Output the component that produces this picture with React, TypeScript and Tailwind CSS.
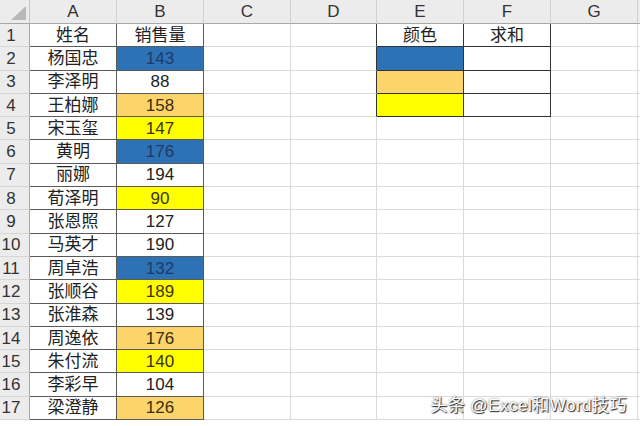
import React from 'react'

type Fill = 'blue' | 'orange' | 'yellow' | ''

const rows: [string, string, Fill][] = [
  ['姓名', '销售量', ''],
  ['杨国忠', '143', 'blue'],
  ['李泽明', '88', ''],
  ['王柏娜', '158', 'orange'],
  ['宋玉玺', '147', 'yellow'],
  ['黄明', '176', 'blue'],
  ['丽娜', '194', ''],
  ['荀泽明', '90', 'yellow'],
  ['张恩照', '127', ''],
  ['马英才', '190', ''],
  ['周卓浩', '132', 'blue'],
  ['张顺谷', '189', 'yellow'],
  ['张淮森', '139', ''],
  ['周逸依', '176', 'orange'],
  ['朱付流', '140', 'yellow'],
  ['李彩早', '104', ''],
  ['梁澄静', '126', 'orange'],
]

const fillClass: Record<string, string> = {
  blue: 'bg-[#2e72b6] text-[#1d3a66]',
  orange: 'bg-[#fdd469] text-[#3a2e10]',
  yellow: 'bg-[#ffff00] text-[#3a3410]',
  '': 'bg-white text-[#222]',
}

const colW = ['w-[87px]', 'w-[87px]', 'w-[87px]', 'w-[86px]', 'w-[87px]', 'w-[87px]', 'w-[87px]']
const letters = ['A', 'B', 'C', 'D', 'E', 'F', 'G']

function Cell({ w, cls, children }: { w: string; cls: string; children?: React.ReactNode }) {
  return (
    <div className={`${w} shrink-0 h-full flex items-center justify-center border-r border-b ${cls}`}>
      {children}
    </div>
  )
}

export default function App() {
  const eFill: Fill[] = ['', 'blue', 'orange', 'yellow']

  return (
    <div className="relative w-[640px] h-[426px] overflow-hidden bg-white text-[17px] leading-none font-['Liberation_Sans','Noto_Sans_CJK_SC',sans-serif] text-[#222]">
      {/* column header */}
      <div className="flex h-[24px] bg-[#ececec]">
        <div className="w-[30px] shrink-0 h-full relative border-r border-b border-r-[#c6c6c6] border-b-[#a8a8a8]">
          <div className="absolute right-[3px] bottom-[3px] w-0 h-0 border-l-[15px] border-l-transparent border-b-[14px] border-b-[#b9b9b9]" />
        </div>
        {letters.map((l, i) => (
          <Cell key={l} w={colW[i]} cls="border-r-[#cfcfcf] border-b-[#a8a8a8] text-[#333]">{l}</Cell>
        ))}
        <div className="flex-1 border-b border-b-[#a8a8a8]" />
      </div>

      {rows.map(([name, val, fill], r) => {
        const n = r + 1
        const inE = r < 4
        return (
          <div key={n} className="flex h-[23.3px]">
            <div className="w-[30px] shrink-0 h-full flex items-center justify-center pr-[7px] bg-[#ececec] border-r border-b border-r-[#a8a8a8] border-b-[#d6d6d6] text-[#333]">
              {n}
            </div>
            <Cell w={colW[0]} cls={`border-[#5a5a5a] ${fillClass['']}`}>{name}</Cell>
            <Cell w={colW[1]} cls={`border-[#5a5a5a] ${fillClass[fill]}`}>{val}</Cell>
            <Cell w={colW[2]} cls="border-r-[#dadada] border-b-[#dadada]" />
            <Cell w={colW[3]} cls={`border-b-[#dadada] ${inE ? 'border-r-[#333]' : 'border-r-[#dadada]'}`} />
            <Cell w={colW[4]} cls={inE ? `border-[#333] ${fillClass[eFill[r]]}` : 'border-r-[#dadada] border-b-[#dadada]'}>
              {r === 0 ? '颜色' : null}
            </Cell>
            <Cell w={colW[5]} cls={inE ? 'border-[#333] bg-white' : 'border-r-[#dadada] border-b-[#dadada]'}>
              {r === 0 ? '求和' : null}
            </Cell>
            <Cell w={colW[6]} cls="border-r-[#dadada] border-b-[#dadada]" />
            <div className="flex-1 border-b border-b-[#dadada]" />
          </div>
        )
      })}

      <div className="absolute right-[13px] top-[397px] whitespace-nowrap text-[17px] tracking-[0.5px] text-white [text-shadow:1px_1px_1px_rgba(0,0,0,0.85),0_0_2px_rgba(0,0,0,0.6)]">
        头条 @Excel和Word技巧
      </div>
    </div>
  )
}
